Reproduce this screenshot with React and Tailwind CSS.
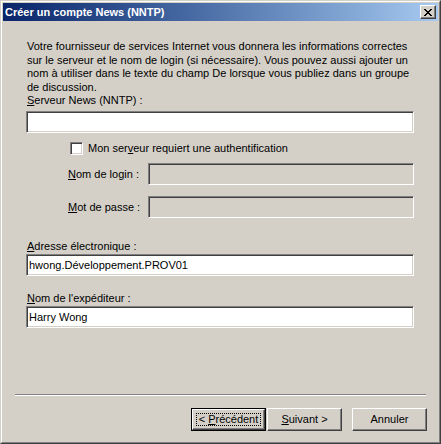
export default function App() {
  const sunken =
    "border border-t-[#808080] border-l-[#808080] border-b-white border-r-white shadow-[inset_1px_1px_0_#404040,inset_-1px_-1px_0_#d4d0c8]";
  const raised =
    "border border-t-white border-l-white border-b-[#404040] border-r-[#404040] shadow-[inset_-1px_-1px_0_#808080,inset_1px_1px_0_#d4d0c8]";

  return (
    <div
      className="w-[441px] h-[444px] bg-[#d4d0c8] text-black text-[11px] leading-[13px]"
      style={{ fontFamily: '"Liberation Sans", Arial, sans-serif' }}
    >
      <div className="w-full h-full border border-t-[#d4d0c8] border-l-[#d4d0c8] border-b-[#404040] border-r-[#404040]">
        <div className="w-full h-full flex flex-col p-px border border-t-white border-l-white border-b-[#808080] border-r-[#808080]">
          {/* Title bar */}
          <div className="h-[18px] flex items-center justify-between pl-[2px] pr-[2px] bg-gradient-to-r from-[#0a246a] to-[#a6caf0]">
            <span className="text-white font-bold text-[11px]">Créer un compte News (NNTP)</span>
            <div className={`w-[16px] h-[14px] bg-[#d4d0c8] flex items-center justify-center ${raised}`}>
              <svg width="8" height="7" viewBox="0 0 8 7">
                <path d="M0 0h2v1h1v1h2v-1h1v-1h2v1h-1v1h-1v1h-1v1h1v1h1v1h1v1h-2v-1h-1v-1h-2v1h-1v1h-2v-1h1v-1h1v-1h1v-1h-1v-1h-1v-1h-1z" fill="#000" />
              </svg>
            </div>
          </div>

          {/* Content */}
          <div className="flex flex-col pl-[23px] pr-[24px]">
            <p className="mt-[19px] ml-px leading-[13.5px]">
              Votre fournisseur de services Internet vous donnera les informations correctes
              <br />
              sur le serveur et le nom de login (si nécessaire). Vous pouvez aussi ajouter un
              <br />
              nom à utiliser dans le texte du champ De lorsque vous publiez dans un groupe
              <br />
              de discussion.
            </p>
            <div className="ml-px">
              <span className="underline">S</span>erveur News (NNTP) :
            </div>
            <div className={`mt-[4px] h-[22px] bg-white ${sunken}`} />

            <div className="mt-[9px] ml-[44px] flex items-center gap-[5px] h-[13px]">
              <div className={`w-[13px] h-[13px] bg-white ${sunken}`} />
              <span>
                Mon ser<span className="underline">v</span>eur requiert une authentification
              </span>
            </div>

            <div className="mt-[8px] ml-[42px] flex items-center">
              <span className="w-[80px]">
                <span className="underline">N</span>om de login :
              </span>
              <div className={`flex-1 h-[22px] bg-[#d4d0c8] ${sunken}`} />
            </div>
            <div className="mt-[11px] ml-[42px] flex items-center">
              <span className="w-[80px]">
                <span className="underline">M</span>ot de passe :
              </span>
              <div className={`flex-1 h-[22px] bg-[#d4d0c8] ${sunken}`} />
            </div>

            <div className="mt-[22px] ml-px">
              <span className="underline">A</span>dresse électronique :
            </div>
            <div className={`mt-px h-[22px] bg-white flex items-center pl-[2px] ${sunken}`}>
              hwong.Développement.PROV01
            </div>

            <div className="mt-[16px] ml-px">
              <span className="underline">N</span>om de l'expéditeur :
            </div>
            <div className={`mt-px h-[22px] bg-white flex items-center pl-[2px] ${sunken}`}>
              Harry Wong
            </div>
          </div>

          {/* Separator */}
          <div className="mt-[66px] mx-[12px] h-[2px] border-t border-t-[#808080] border-b border-b-white" />

          {/* Buttons */}
          <div className="mt-[12px] pr-[11px] flex justify-end">
            <div className="w-[75px] h-[23px] border border-black">
              <div className={`w-full h-full flex items-center justify-center p-[3px] ${raised}`}>
                <div className="w-full h-full border border-dotted border-black flex items-center justify-center">
                  &lt; <span className="underline ml-[3px]">P</span>récédent
                </div>
              </div>
            </div>
            <div className={`ml-px w-[75px] h-[23px] flex items-center justify-center ${raised}`}>
              <span>
                <span className="underline">S</span>uivant &gt;
              </span>
            </div>
            <div className={`ml-[10px] w-[75px] h-[23px] flex items-center justify-center ${raised}`}>
              Annuler
            </div>
          </div>
        </div>
      </div>
    </div>
  );
}
